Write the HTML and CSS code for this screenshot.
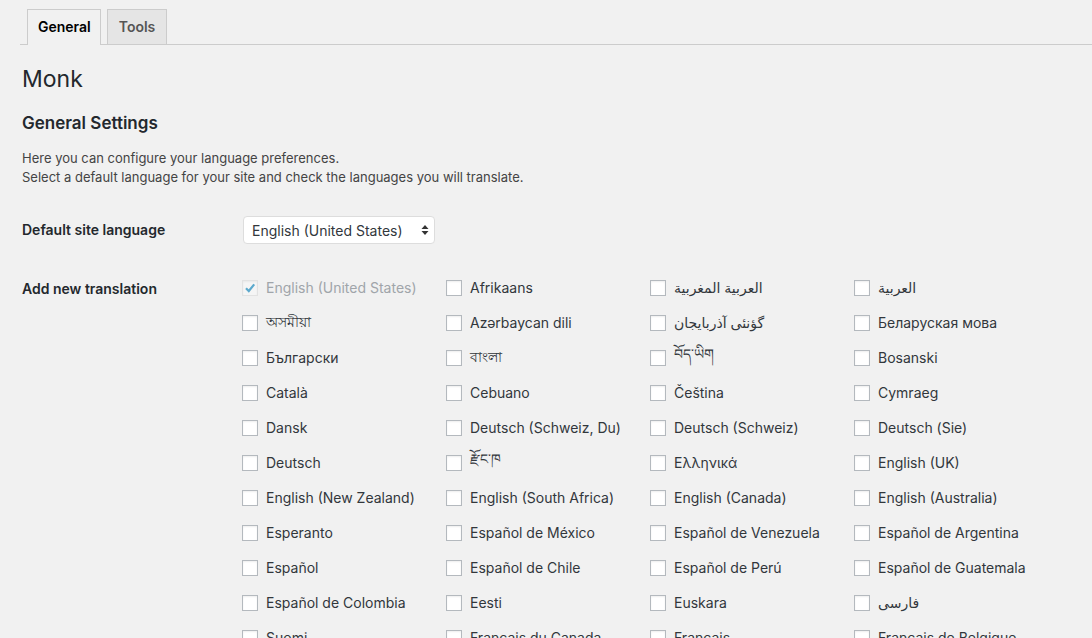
FILE: index.html
```html
<!DOCTYPE html>
<html lang="en">
<head>
<meta charset="utf-8">
<title>Monk</title>
<link rel="stylesheet" href="styles.css">
</head>
<body>
<div class="wrap">
  <nav class="tabs">
    <a class="tab active">General</a>
    <a class="tab tab-tools">Tools</a>
  </nav>
  <div class="content">
    <h1 class="title">Monk</h1>
    <h2 class="subtitle">General Settings</h2>
    <p class="intro">Here you can configure your language preferences.<br>Select a default language for your site and check the languages you will translate.</p>

    <div class="form-row row-select">
      <div class="form-label">Default site language</div>
      <div class="select">
        <span class="select-text">English (United States)</span>
        <svg class="select-arrows" width="8" height="12" viewBox="0 0 8 12"><path d="M4 1 L7.5 5 H0.5 Z M4 11 L7.5 7 H0.5 Z" fill="#333"/></svg>
      </div>
    </div>

    <div class="form-row row-langs">
      <div class="form-label label-langs">Add new translation</div>
      <div class="langs">
        <label class="lang disabled"><span class="cb checked"><svg width="14" height="14" viewBox="0 0 14 14"><path d="M3 7.2 L5.8 10 L11.2 3.4" fill="none" stroke="#1e8cbe" stroke-width="2.2"/></svg></span><span class="lang-name">English (United States)</span></label>
        <label class="lang"><span class="cb"></span><span class="lang-name">Afrikaans</span></label>
        <label class="lang"><span class="cb"></span><span class="lang-name" dir="rtl">العربية المغربية</span></label>
        <label class="lang"><span class="cb"></span><span class="lang-name" dir="rtl">العربية</span></label>

        <label class="lang"><span class="cb"></span><span class="lang-name">অসমীয়া</span></label>
        <label class="lang"><span class="cb"></span><span class="lang-name">Azərbaycan dili</span></label>
        <label class="lang"><span class="cb"></span><span class="lang-name" dir="rtl">گؤنئی آذربایجان</span></label>
        <label class="lang"><span class="cb"></span><span class="lang-name">Беларуская мова</span></label>

        <label class="lang"><span class="cb"></span><span class="lang-name">Български</span></label>
        <label class="lang"><span class="cb"></span><span class="lang-name">বাংলা</span></label>
        <label class="lang"><span class="cb"></span><span class="lang-name">བོད་ཡིག</span></label>
        <label class="lang"><span class="cb"></span><span class="lang-name">Bosanski</span></label>

        <label class="lang"><span class="cb"></span><span class="lang-name">Català</span></label>
        <label class="lang"><span class="cb"></span><span class="lang-name">Cebuano</span></label>
        <label class="lang"><span class="cb"></span><span class="lang-name">Čeština</span></label>
        <label class="lang"><span class="cb"></span><span class="lang-name">Cymraeg</span></label>

        <label class="lang"><span class="cb"></span><span class="lang-name">Dansk</span></label>
        <label class="lang"><span class="cb"></span><span class="lang-name">Deutsch (Schweiz, Du)</span></label>
        <label class="lang"><span class="cb"></span><span class="lang-name">Deutsch (Schweiz)</span></label>
        <label class="lang"><span class="cb"></span><span class="lang-name">Deutsch (Sie)</span></label>

        <label class="lang"><span class="cb"></span><span class="lang-name">Deutsch</span></label>
        <label class="lang"><span class="cb"></span><span class="lang-name">རྫོང་ཁ</span></label>
        <label class="lang"><span class="cb"></span><span class="lang-name">Ελληνικά</span></label>
        <label class="lang"><span class="cb"></span><span class="lang-name">English (UK)</span></label>

        <label class="lang"><span class="cb"></span><span class="lang-name">English (New Zealand)</span></label>
        <label class="lang"><span class="cb"></span><span class="lang-name">English (South Africa)</span></label>
        <label class="lang"><span class="cb"></span><span class="lang-name">English (Canada)</span></label>
        <label class="lang"><span class="cb"></span><span class="lang-name">English (Australia)</span></label>

        <label class="lang"><span class="cb"></span><span class="lang-name">Esperanto</span></label>
        <label class="lang"><span class="cb"></span><span class="lang-name">Español de México</span></label>
        <label class="lang"><span class="cb"></span><span class="lang-name">Español de Venezuela</span></label>
        <label class="lang"><span class="cb"></span><span class="lang-name">Español de Argentina</span></label>

        <label class="lang"><span class="cb"></span><span class="lang-name">Español</span></label>
        <label class="lang"><span class="cb"></span><span class="lang-name">Español de Chile</span></label>
        <label class="lang"><span class="cb"></span><span class="lang-name">Español de Perú</span></label>
        <label class="lang"><span class="cb"></span><span class="lang-name">Español de Guatemala</span></label>

        <label class="lang"><span class="cb"></span><span class="lang-name">Español de Colombia</span></label>
        <label class="lang"><span class="cb"></span><span class="lang-name">Eesti</span></label>
        <label class="lang"><span class="cb"></span><span class="lang-name">Euskara</span></label>
        <label class="lang"><span class="cb"></span><span class="lang-name" dir="rtl">فارسی</span></label>

        <label class="lang"><span class="cb"></span><span class="lang-name">Suomi</span></label>
        <label class="lang"><span class="cb"></span><span class="lang-name">Français du Canada</span></label>
        <label class="lang"><span class="cb"></span><span class="lang-name">Français</span></label>
        <label class="lang"><span class="cb"></span><span class="lang-name">Français de Belgique</span></label>
      </div>
    </div>
  </div>
</div>
</body>
</html>
```

FILE: styles.css
```css
html, body {
  margin: 0;
  padding: 0;
  background: #f1f1f1;
  color: #23282d;
  font-family: Inter, "Liberation Sans", "DejaVu Sans", "Noto Sans", sans-serif;
  font-size: 13px;
  overflow: hidden;
}

.wrap {
  padding-left: 20px;
}

.tabs {
  display: flex;
  gap: 6px;
  padding-top: 9px;
  padding-left: 7px;
  border-bottom: 1px solid #ccc;
}

.tab {
  display: block;
  height: 34px;
  line-height: 34px;
  padding: 0 10px;
  border: 1px solid #ccc;
  border-bottom: none;
  background: #e5e5e5;
  color: #555;
  font-size: 14px;
  font-weight: 600;
}

.tab.active {
  background: #f1f1f1;
  color: #000;
  height: 35px;
  margin-bottom: -1px;
  padding: 0 9px 0 10px;
}

.tab-tools {
  padding: 0 11px;
}

.content {
  padding-left: 2px;
}

.title {
  margin: 20px 0 0;
  font-size: 23px;
  line-height: 29px;
  font-weight: 400;
  color: #23282d;
}

.subtitle {
  margin: 17px 0 0;
  font-size: 17px;
  line-height: 24px;
  font-weight: 600;
  color: #23282d;
}

.intro {
  margin: 14px 0 0;
  font-size: 13px;
  line-height: 19px;
  color: #444;
}

.form-row {
  display: flex;
  align-items: flex-start;
}

.form-label {
  width: 221px;
  flex: none;
  font-size: 14px;
  font-weight: 600;
  color: #23282d;
}

.row-select {
  margin-top: 29px;
  align-items: center;
}

.row-select .form-label {
  padding-bottom: 1px;
}

.select {
  box-sizing: border-box;
  width: 192px;
  height: 28px;
  display: flex;
  align-items: center;
  justify-content: space-between;
  padding: 0 5px 0 8px;
  background: #fff;
  border: 1px solid #ddd;
  border-radius: 4px;
  font-size: 14px;
  color: #32373c;
}

.select-arrows {
  display: block;
}

.row-langs {
  margin-top: 26px;
}

.label-langs {
  line-height: 35px;
  padding-top: 1px;
}

.langs {
  display: grid;
  grid-template-columns: repeat(4, 204px);
  grid-auto-rows: 35px;
}

.lang {
  display: flex;
  align-items: center;
  gap: 8px;
  font-size: 14px;
  color: #32373c;
  white-space: nowrap;
}

.lang-name {
  unicode-bidi: isolate;
}

.cb {
  box-sizing: border-box;
  flex: none;
  width: 16px;
  height: 16px;
  margin-left: -1px;
  background: #fff;
  border: 1px solid #b4b9be;
  box-shadow: inset 0 1px 2px rgba(0, 0, 0, 0.07);
  display: flex;
  align-items: center;
  justify-content: center;
}

.lang.disabled .cb {
  background: #f7f7f7;
  border-color: #ddd;
  opacity: 0.7;
}

.lang.disabled .lang-name {
  color: #a0a5aa;
}
```
